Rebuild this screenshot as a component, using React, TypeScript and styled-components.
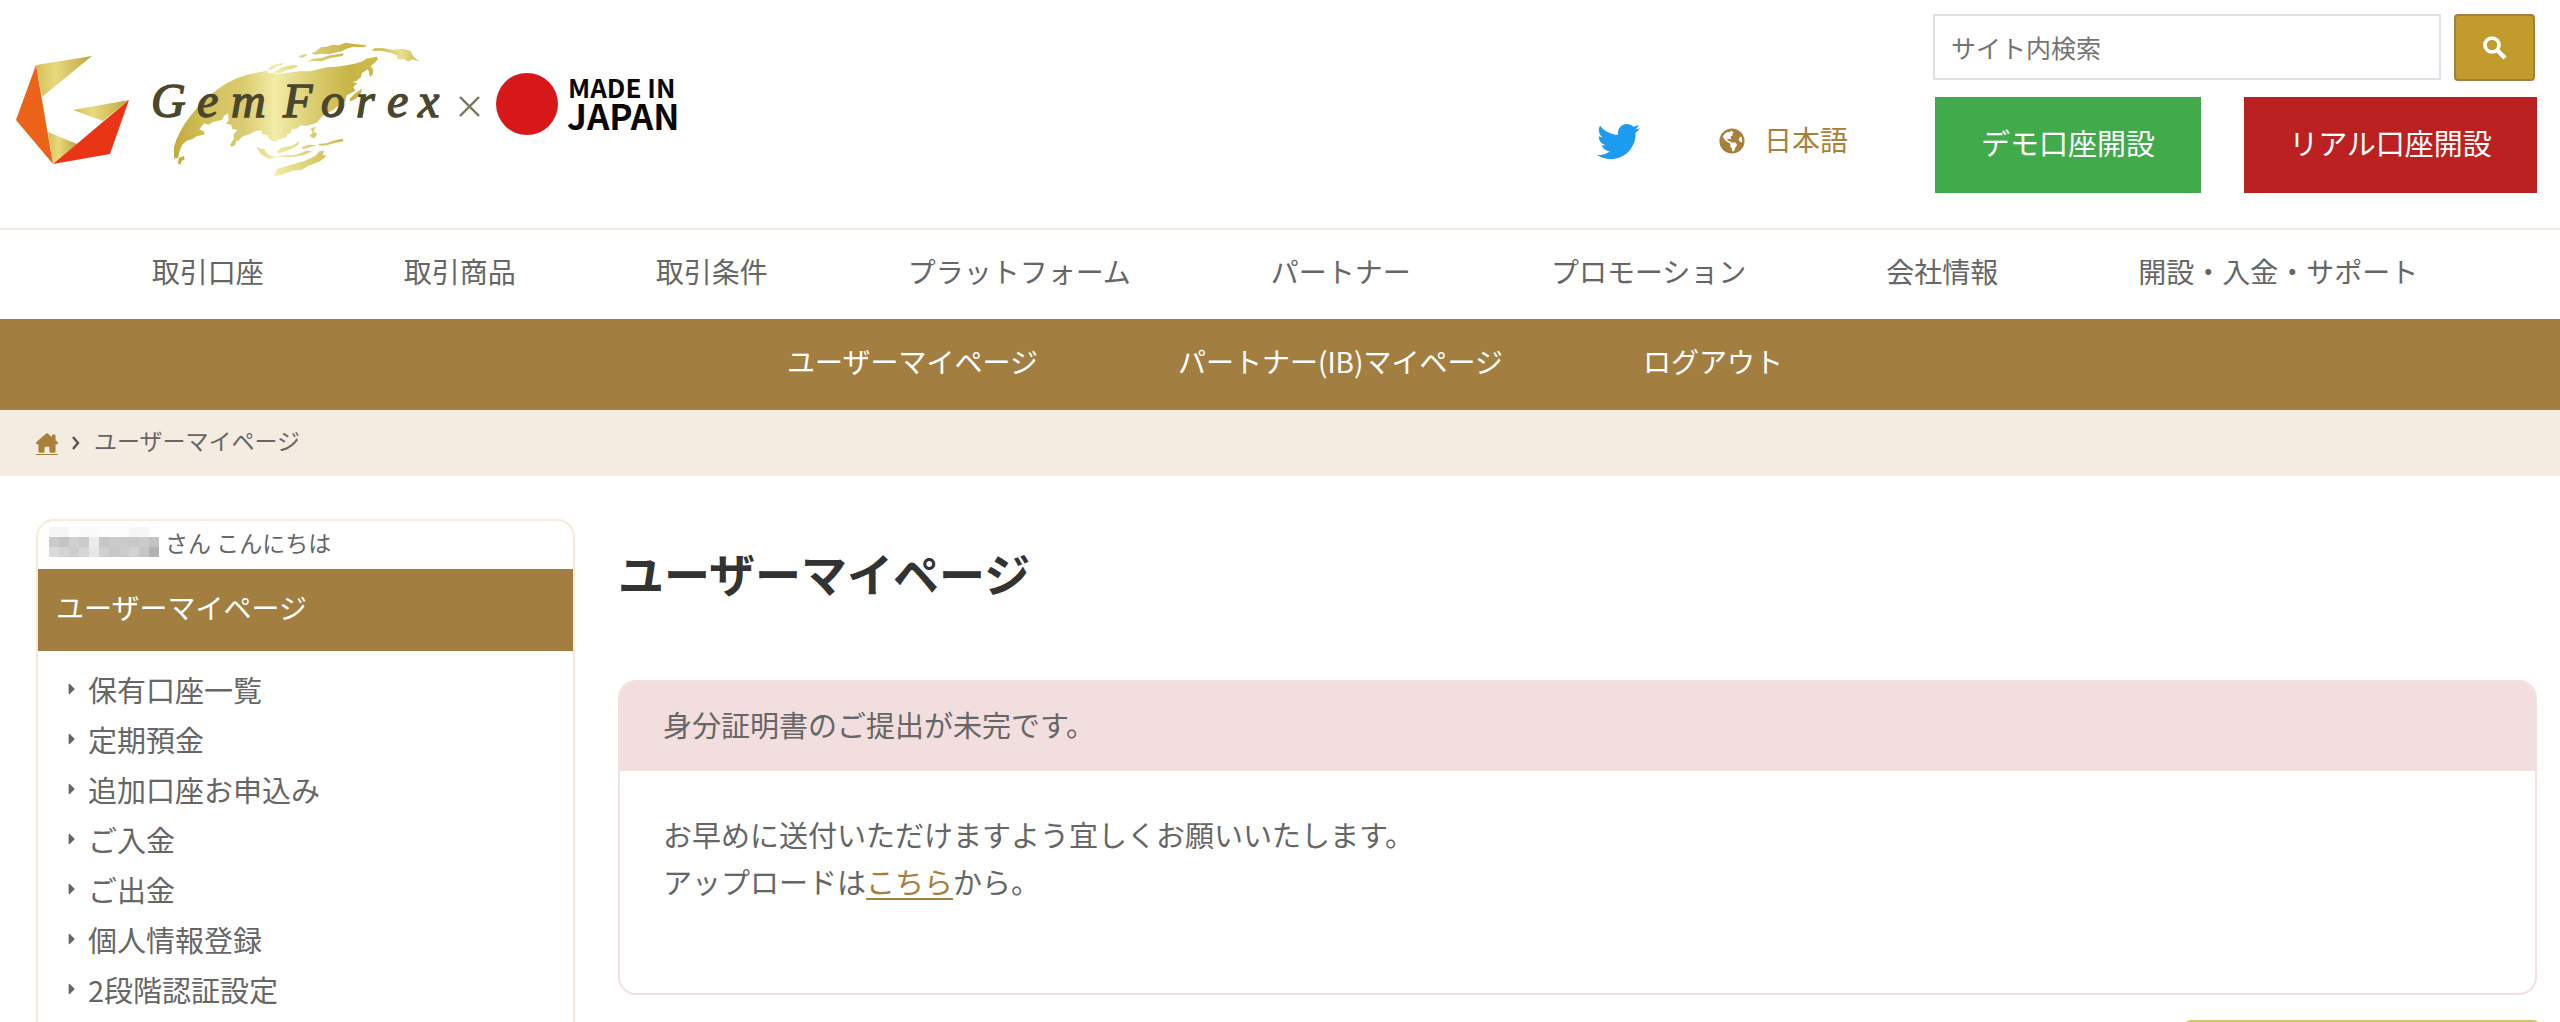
import React from "react";
import styled, { createGlobalStyle } from "styled-components";
import { FaTwitter, FaGlobeAmericas, FaCaretRight } from "react-icons/fa";
import { FaHouseChimney } from "react-icons/fa6";

const gold = "#a27f40";
const link = "#a9803b";
const cream = "#f4ebe1";
const text = "#666";

const GlobalStyle = createGlobalStyle`
  * { box-sizing: border-box; }
  body {
    margin: 0;
    background: #fff;
    color: ${text};
    font-family: "Noto Sans CJK JP", sans-serif;
    font-size: 29px;
    line-height: 46px;
  }
  a { color: inherit; text-decoration: none; }
  ul { list-style: none; margin: 0; padding: 0; }
`;

const Page = styled.div`
  height: 100vh;
  overflow: hidden;
`;

const Header = styled.header`
  display: flex;
  justify-content: space-between;
  align-items: flex-start;
  height: 230px;
  padding: 14px 23px 0 16px;
  border-bottom: 2px solid #f5e9de;
`;

const LogoLink = styled.a`
  display: block;
  padding-top: 26px;
  svg { display: block; }
`;

const Tools = styled.div`
  display: flex;
  align-items: flex-end;
`;

const TwitterLink = styled.a`
  display: flex;
  align-items: center;
  height: 104px;
  margin-right: 79px;
  color: #1d9bf0;
`;

const Language = styled.a`
  display: flex;
  align-items: center;
  gap: 19px;
  height: 104px;
  margin-right: 87px;
  color: ${link};
  font-size: 28px;
  span { padding-bottom: 4px; }
`;

const Actions = styled.div`
  display: flex;
  flex-direction: column;
  gap: 16px;
`;

const Search = styled.form`
  display: flex;
  gap: 13px;
  margin: 0 2px 0 -2px;
`;

const SearchInput = styled.input`
  flex: 1;
  min-width: 0;
  height: 66px;
  padding: 0 16px;
  border: 2px solid #e0e0e8;
  background: #fff;
  color: ${text};
  font: 25px "Noto Sans CJK JP", sans-serif;
  &::placeholder { color: #757575; opacity: 1; }
`;

const SearchButton = styled.button`
  display: flex;
  align-items: center;
  justify-content: center;
  width: 81px;
  height: 67px;
  padding: 0;
  border: 2px solid ${gold};
  border-radius: 4px;
  background: #c19b2c;
`;

const Buttons = styled.div`
  display: flex;
  gap: 43px;
`;

const OpenButton = styled.a<{ $color: string; $wide?: boolean }>`
  display: flex;
  align-items: center;
  justify-content: center;
  width: ${(p) => (p.$wide ? 293 : 266)}px;
  height: 96px;
  padding-bottom: 7px;
  background: ${(p) => p.$color};
  color: #fff;
`;

const MenuBar = styled.nav<{ $dark?: boolean }>`
  display: flex;
  justify-content: center;
  align-items: center;
  gap: 140px;
  height: ${(p) => (p.$dark ? 91 : 89)}px;
  padding: 0 0 8px 10px;
  background: ${(p) => (p.$dark ? gold : "#fff")};
  color: ${(p) => (p.$dark ? "#fff" : text)};
  font-size: 28px;
  white-space: nowrap;
`;

const Breadcrumb = styled.nav`
  display: flex;
  align-items: center;
  gap: 14px;
  height: 66px;
  padding: 0 36px;
  background: ${cream};
  font-size: 23px;
  span { padding-bottom: 6px; }
`;

const HomeLink = styled.a`
  display: flex;
  border-bottom: 1px solid ${link};
  color: ${link};
`;

const Columns = styled.div`
  display: flex;
  align-items: flex-start;
  gap: 43px;
  padding: 43px 23px 0 36px;
`;

const Sidebar = styled.aside`
  flex: none;
  width: 539px;
  min-height: 600px;
  border: 2px solid #f7ead9;
  border-radius: 18px;
  overflow: hidden;
`;

const Greeting = styled.p`
  display: flex;
  align-items: center;
  gap: 6px;
  height: 48px;
  margin: 0;
  padding: 0 0 7px 11px;
  font-size: 23px;
`;

const SideTitle = styled.h2`
  height: 82px;
  margin: 0;
  padding: 15px 18px;
  background: ${gold};
  color: #fff;
  font-size: 28px;
  font-weight: 400;
`;

const SideList = styled.ul`
  padding: 13px 25px;
`;

const SideItem = styled.li`
  line-height: 50px;
  a { display: flex; align-items: center; gap: 7px; }
`;

const Main = styled.main`
  flex: 1;
  min-width: 0;
`;

const Title = styled.h1`
  margin: 17px 0 72px;
  color: #333;
  font-size: 46px;
  line-height: 72px;
`;

const Notice = styled.section`
  border: 2px solid #f5dfe1;
  border-radius: 18px;
  overflow: hidden;
`;

const NoticeHead = styled.h2`
  margin: 0;
  padding: 19px 43px 24px;
  background: #f2dede;
  font-size: 29px;
  font-weight: 400;
`;

const NoticeBody = styled.p`
  margin: 0;
  padding: 40px 43px 88px;
  line-height: 47px;
`;

const InlineLink = styled.a`
  color: ${link};
  text-decoration: underline;
  text-decoration-thickness: 2px;
  text-underline-offset: 4px;
`;

const PillButton = styled.button`
  display: block;
  width: 358px;
  height: 80px;
  margin: 25px -4px 0 auto;
  border: 0;
  border-radius: 8px;
  background: #d5c66b;
`;

const mainMenu = ["取引口座", "取引商品", "取引条件", "プラットフォーム", "パートナー", "プロモーション", "会社情報", "開設・入金・サポート"];
const userMenu = ["ユーザーマイページ", "パートナー(IB)マイページ", "ログアウト"];
const sideMenu = ["保有口座一覧", "定期預金", "追加口座お申込み", "ご入金", "ご出金", "個人情報登録", "2段階認証設定"];

const mosaic = [
  "#f6f6f6", "#f6f6f6", "#fdfdfd", "#fbfbfb", "#fbfbfb", "#fdfdfd", "#fdfdfd", "#fdfdfd", "#f6f6f6", "#f6f6f6", "#fefefe",
  "#cbcbcb", "#c4c4c4", "#d0d0d0", "#cbcbcb", "#e9eded", "#c6c6c6", "#cbcbcb", "#cacaca", "#c8c8c8", "#cccccc", "#c3c3c3",
  "#dadada", "#d4d4d4", "#cdcdcd", "#d6d6d6", "#e6e8e8", "#cfcfcf", "#c8c8c8", "#cccccc", "#d2d2d2", "#c6c6c6", "#b2b2b2",
];

const HiddenName = () => (
  <svg width="110" height="30" shapeRendering="crispEdges" aria-hidden="true">
    {mosaic.map((c, i) => (
      <rect key={i} x={(i % 11) * 10} y={Math.floor(i / 11) * 10} width="10" height="10" fill={c} />
    ))}
  </svg>
);

const brushStrokes = [
  "M42 385L42 352L50 326L62 302L75 280L92 257L110 235L150 195L175 176L200 160L230 145L260 135L290 128L322 122L326 130L345 128L350 133L385 128L420 124L450 124L500 112L530 110L560 106L590 100L612 92L618 86L650 80L654 86L648 95L632 108L640 120L638 134L630 140L624 118L605 130L603 142L590 152L578 156L592 160L580 172L586 182L560 196L556 214L536 226L520 240L500 250L484 262L470 278L440 288L422 286L410 296L395 298L392 310L382 312L380 322L362 326L346 335L330 330L322 316L305 312L306 302L290 302L270 312L246 320L236 332L228 334L226 346L214 350L210 344L222 326L220 314L232 300L216 296L214 284L198 282L206 270L204 250L192 258L186 270L158 276L146 284L132 280L118 298L134 306L132 314L112 318L96 328L80 332L66 345L58 366L54 384Z",
  "M56 384L72 378L74 388L64 394L62 404L54 400Z",
  "M322 121L334 108L352 102L370 98L366 104L352 108L340 118Z",
  "M340 128L366 112L400 104L416 108L396 118L380 120L360 130Z",
  "M415 80L426 74L442 72L438 78L424 84Z",
  "M455 70L468 64L482 52L500 50L516 44L536 46L556 38L582 42L620 46L614 52L580 50L560 56L545 64L524 68L508 73L484 71L464 74Z",
  "M440 96L460 86L484 84L510 76L552 70L548 78L510 84L484 94L456 92Z",
  "M635 62L644 55L668 54L700 60L728 56L752 62L756 72L762 82L780 95L758 88L744 95L734 88L714 88L710 76L690 68L662 62Z",
  "M546 232L570 216L570 205L586 190L606 176L604 188L588 206L572 214L560 222Z",
  "M288 350L302 356L314 358L318 366L328 376L348 380L380 376L408 374L440 362L456 364L430 376L390 382L360 380L326 386L304 374Z",
  "M350 366L362 354L380 350L396 348L410 338L418 334L414 344L400 354L378 364L358 370Z",
  "M474 342L500 340L520 332L548 326L550 334L520 340L500 346L480 347Z",
  "M452 296L468 290L460 304L472 312L462 326L448 318L458 308Z",
  "M424 352L446 344L470 346L450 352L430 358Z",
  "M342 438L350 424L346 418L374 410L400 402L432 394L466 378L478 364L492 362L488 374L500 378L480 394L444 408L424 420L398 422L360 436Z",
];

const Logo = () => (
  <svg width="664" height="140" viewBox="16 40 664 140" role="img" aria-label="GemForex × MADE IN JAPAN">
    <defs>
      <linearGradient id="leaf">
        <stop offset="0" stopColor="#d3bf55" />
        <stop offset="0.35" stopColor="#e8da7e" />
        <stop offset="1" stopColor="#bfa63c" />
      </linearGradient>
      <linearGradient id="brush" gradientUnits="userSpaceOnUse" x1="42" y1="0" x2="782" y2="0">
        <stop offset="0" stopColor="#c2ab3e" />
        <stop offset="0.14" stopColor="#d3c25c" />
        <stop offset="0.28" stopColor="#dacb70" />
        <stop offset="0.41" stopColor="#f3eca8" />
        <stop offset="0.55" stopColor="#dccf75" />
        <stop offset="0.72" stopColor="#c8b443" />
        <stop offset="0.82" stopColor="#cdbb4c" />
        <stop offset="0.92" stopColor="#e8df94" />
        <stop offset="1" stopColor="#cbb94c" />
      </linearGradient>
    </defs>
    <path d="M36 65L92 56L42 97Z" fill="url(#leaf)" />
    <path d="M73 110L129 100L103 121Z" fill="url(#leaf)" />
    <path d="M48 132L77 144L53 164Z" fill="url(#leaf)" />
    <path d="M36 65L16 120L53 164Z" fill="#ea6318" />
    <path d="M129 100L110 154L53 164Z" fill="#e73516" />
    <g fill="url(#brush)" transform="translate(160 30) scale(0.3333)">
      {brushStrokes.map((d) => <path key={d} d={d} />)}
    </g>
    <g fill="#4b472c" stroke="#4b472c" strokeWidth="1.4" fontFamily="'Liberation Serif', serif" fontSize="48" fontStyle="italic">
      {[["G", 151], ["e", 197], ["m", 231], ["F", 283], ["o", 321], ["r", 356], ["e", 387], ["x", 418]].map(([c, x]) => (
        <text key={x} x={x} y="117">{c}</text>
      ))}
    </g>
    <path d="M460 97L479 116M479 97L460 116" stroke="#77755d" strokeWidth="2.4" />
    <circle cx="527" cy="104" r="31" fill="#d71718" />
    <g fill="#0b0707" fontFamily="'Noto Sans CJK JP', sans-serif" fontWeight="700">
      <text x="568" y="98" fontSize="26">MADE IN</text>
      <text x="567" y="130" fontSize="35">JAPAN</text>
    </g>
  </svg>
);

const SearchIcon = () => (
  <svg width="24" height="24" viewBox="0 0 24 24" fill="none" stroke="#fff" aria-hidden="true">
    <circle cx="9" cy="9" r="7" strokeWidth="3.6" />
    <path d="M14 14L22 22" strokeWidth="4.4" />
  </svg>
);

const Chevron = () => (
  <svg width="8" height="16" viewBox="0 0 8 16" fill="none" stroke="#555" strokeWidth="2.4" aria-hidden="true">
    <path d="M1 2L6 8L1 14" />
  </svg>
);

export default function App() {
  return (
    <Page>
      <GlobalStyle />
      <Header>
        <LogoLink href="#"><Logo /></LogoLink>
        <Tools>
          <TwitterLink href="#" aria-label="Twitter"><FaTwitter size={43} /></TwitterLink>
          <Language href="#"><FaGlobeAmericas size={26} /><span>日本語</span></Language>
          <Actions>
            <Search onSubmit={(e) => e.preventDefault()}>
              <SearchInput type="text" placeholder="サイト内検索" aria-label="サイト内検索" />
              <SearchButton type="submit" aria-label="検索"><SearchIcon /></SearchButton>
            </Search>
            <Buttons>
              <OpenButton href="#" $color="#41aa4a">デモ口座開設</OpenButton>
              <OpenButton href="#" $color="#bc2121" $wide>リアル口座開設</OpenButton>
            </Buttons>
          </Actions>
        </Tools>
      </Header>
      <MenuBar>{mainMenu.map((m) => <a key={m} href="#">{m}</a>)}</MenuBar>
      <MenuBar $dark>{userMenu.map((m) => <a key={m} href="#">{m}</a>)}</MenuBar>
      <Breadcrumb>
        <HomeLink href="#" aria-label="ホーム"><FaHouseChimney size={22} /></HomeLink>
        <Chevron />
        <span>ユーザーマイページ</span>
      </Breadcrumb>
      <Columns>
        <Sidebar>
          <Greeting><HiddenName />さん こんにちは</Greeting>
          <SideTitle>ユーザーマイページ</SideTitle>
          <SideList>
            {sideMenu.map((m) => (
              <SideItem key={m}><a href="#"><FaCaretRight size={18} />{m}</a></SideItem>
            ))}
          </SideList>
        </Sidebar>
        <Main>
          <Title>ユーザーマイページ</Title>
          <Notice>
            <NoticeHead>身分証明書のご提出が未完です。</NoticeHead>
            <NoticeBody>
              お早めに送付いただけますよう宜しくお願いいたします。<br />
              アップロードは<InlineLink href="#">こちら</InlineLink>から。
            </NoticeBody>
          </Notice>
          <PillButton type="button" aria-label="アップロード" />
        </Main>
      </Columns>
    </Page>
  );
}
